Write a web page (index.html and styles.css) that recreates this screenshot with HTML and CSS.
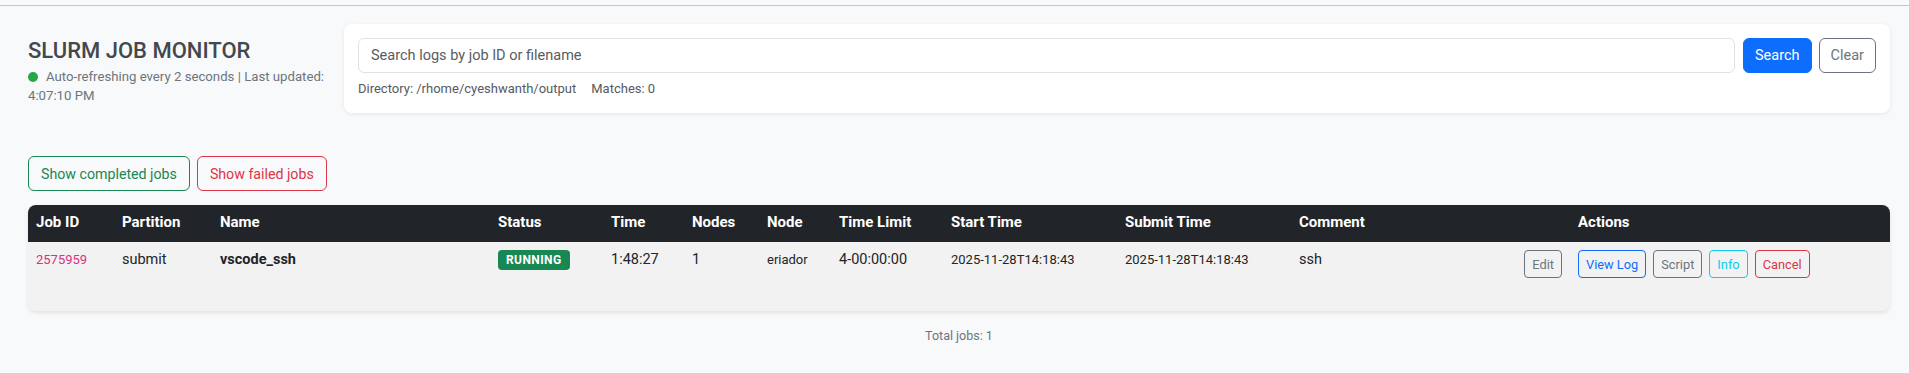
FILE: index.html
```html
<!DOCTYPE html>
<html lang="en">
<head>
  <meta charset="UTF-8">
  <meta name="viewport" content="width=device-width, initial-scale=1.0">
  <title>SLURM Job Monitor</title>
  <link rel="stylesheet" href="styles.css">
</head>
<body>
  <div class="topbar"></div>

  <div class="page">
    <div class="head">
      <div class="brand">
        <h1>SLURM JOB MONITOR</h1>
        <p class="status"><span class="dot"></span>Auto-refreshing every 2 seconds | Last updated: 4:07:10 PM</p>
      </div>

      <div class="search-card">
        <div class="search-row">
          <input type="text" id="logSearch" placeholder="Search logs by job ID or filename">
          <button class="btn btn-primary">Search</button>
          <button class="btn btn-outline-secondary">Clear</button>
        </div>
        <div class="search-meta">
          <span>Directory: /rhome/cyeshwanth/output</span>
          <span>Matches: 0</span>
        </div>
      </div>
    </div>

    <div class="filters">
      <button class="btn btn-outline-success">Show completed jobs</button>
      <button class="btn btn-outline-danger">Show failed jobs</button>
    </div>

    <div class="table-wrap">
      <table class="jobs">
        <colgroup>
          <col style="width: 86px">
          <col style="width: 98px">
          <col style="width: 278px">
          <col style="width: 113px">
          <col style="width: 81px">
          <col style="width: 75px">
          <col style="width: 72px">
          <col style="width: 112px">
          <col style="width: 174px">
          <col style="width: 174px">
          <col style="width: 279px">
          <col>
        </colgroup>
        <thead>
          <tr>
            <th>Job ID</th>
            <th>Partition</th>
            <th>Name</th>
            <th>Status</th>
            <th>Time</th>
            <th>Nodes</th>
            <th>Node</th>
            <th>Time Limit</th>
            <th>Start Time</th>
            <th>Submit Time</th>
            <th>Comment</th>
            <th>Actions</th>
          </tr>
        </thead>
        <tbody>
          <tr>
            <td><code class="job-id">2575959</code></td>
            <td>submit</td>
            <td><strong>vscode_ssh</strong></td>
            <td><span class="badge">RUNNING</span></td>
            <td>1:48:27</td>
            <td>1</td>
            <td><small>eriador</small></td>
            <td>4-00:00:00</td>
            <td><small>2025-11-28T14:18:43</small></td>
            <td><small>2025-11-28T14:18:43</small></td>
            <td>
              <div class="comment">
                <span>ssh</span>
                <button class="btn btn-sm btn-outline-secondary">Edit</button>
              </div>
            </td>
            <td>
              <div class="actions">
                <button class="btn btn-sm btn-outline-primary">View Log</button>
                <button class="btn btn-sm btn-outline-secondary">Script</button>
                <button class="btn btn-sm btn-outline-info">Info</button>
                <button class="btn btn-sm btn-outline-danger">Cancel</button>
              </div>
            </td>
          </tr>
        </tbody>
      </table>
    </div>

    <div class="total">Total jobs: 1</div>
  </div>
</body>
</html>
```

FILE: styles.css
```css
body {
  margin: 0;
  font-family: Roboto, "Liberation Sans", sans-serif;
  background: #f8f9fa;
  color: #212529;
}

.topbar {
  height: 5px;
  background: #fafafa;
  border-bottom: 1px solid #c6c6c6;
}

.page {
  padding: 18px 19px 20px 28px;
}

/* Header */
.head {
  display: flex;
  align-items: flex-start;
  gap: 14px;
}

.brand {
  flex: none;
  width: 302px;
  padding-top: 14px;
}

.brand h1 {
  margin: 0 0 3px;
  font-size: 22px;
  font-weight: 500;
  line-height: 1.2;
  color: #43484d;
}

.status {
  margin: 0;
  font-size: 13.2px;
  line-height: 19px;
  color: #6c757d;
}

.dot {
  display: inline-block;
  width: 10px;
  height: 10px;
  border-radius: 50%;
  background: #28a745;
  margin-right: 8px;
  vertical-align: -1px;
}

.search-card {
  flex: 1;
  background: #fff;
  border-radius: 8px;
  box-shadow: 0 1px 4px rgba(0, 0, 0, 0.08);
  padding: 14px 14px 15px;
}

.search-row {
  display: flex;
  gap: 7px;
}

.search-row input {
  flex: 1;
  height: 35px;
  box-sizing: border-box;
  margin-right: 1px;
  padding: 0 12px;
  border: 1px solid #dee2e6;
  border-radius: 6px;
  font-family: inherit;
  font-size: 14.5px;
  color: #212529;
}

.search-row input::placeholder {
  color: #595c5f;
}

.search-meta {
  display: flex;
  gap: 15px;
  margin-top: 7px;
  font-size: 13px;
  line-height: 18px;
  color: #555b61;
}

/* Buttons */
.btn {
  height: 35px;
  padding: 0 11px;
  border: 1px solid transparent;
  border-radius: 6px;
  background: transparent;
  font-family: inherit;
  font-size: 14.5px;
  cursor: pointer;
}

.btn-primary {
  background: #0d6efd;
  border-color: #0d6efd;
  color: #fff;
}

.btn-outline-primary {
  border-color: #0d6efd;
  color: #0d6efd;
}

.btn-outline-secondary {
  border-color: #6c757d;
  color: #6c757d;
}

.btn-outline-success {
  border-color: #198754;
  color: #198754;
}

.btn-outline-danger {
  border-color: #dc3545;
  color: #dc3545;
}

.btn-outline-info {
  border-color: #0dcaf0;
  color: #0dcaf0;
}

.btn-sm {
  height: 28px;
  padding: 0 7px;
  border-radius: 4px;
  font-size: 12.8px;
}

.filters {
  display: flex;
  gap: 7px;
  margin-top: 43px;
}

.filters .btn {
  padding: 0 12px;
  font-size: 14.2px;
}

/* Jobs table */
.table-wrap {
  margin-top: 14px;
  background: #f2f2f2;
  border-radius: 8px;
  overflow: hidden;
  box-shadow: 0 2px 4px rgba(0, 0, 0, 0.09);
}

.jobs {
  width: 100%;
  border-collapse: collapse;
  table-layout: fixed;
}

.jobs th {
  padding: 7px 8px 9px;
  background: #212529;
  color: #fff;
  text-align: left;
  font-size: 15px;
  font-weight: 700;
  line-height: 21px;
}

.jobs tbody tr {
  height: 69px;
}

.jobs td {
  padding: 8px;
  font-size: 14.5px;
  line-height: 20px;
  vertical-align: top;
}

.jobs small {
  font-size: 13px;
}

.job-id {
  font-family: inherit;
  font-size: 13px;
  color: #d63384;
}

.badge {
  display: inline-block;
  padding: 3px 8px;
  border-radius: 4px;
  background: #198754;
  color: #fff;
  font-size: 12px;
  font-weight: 700;
  line-height: 14px;
  letter-spacing: 0.4px;
}

.comment {
  display: flex;
  justify-content: space-between;
  align-items: flex-start;
}

.actions {
  display: flex;
  gap: 7px;
}

.total {
  margin-top: 16px;
  text-align: center;
  font-size: 12.5px;
  line-height: 18px;
  color: #6c757d;
}
```
